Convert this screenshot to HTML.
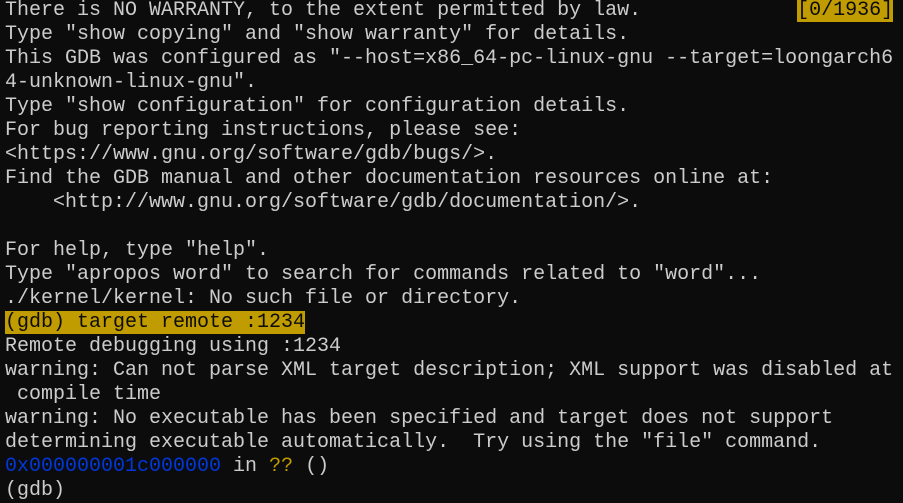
<!DOCTYPE html>
<html><head><meta charset="utf-8"><style>
html,body{margin:0;padding:0;background:#0c0c0c;width:903px;height:498px;overflow:hidden}
pre{margin:0;position:absolute;left:5px;top:-1px;font-family:"Liberation Mono",monospace;font-size:20px;line-height:24px;color:#cccccc;white-space:pre}
.hl{background:#c19c00;color:#0c0c0c}
.b{color:#0037da}.y{color:#c19c00}
</style></head><body>
<pre>There is NO WARRANTY, to the extent permitted by law.             <span class="hl">[0/1936]</span>
Type "show copying" and "show warranty" for details.
This GDB was configured as "--host=x86_64-pc-linux-gnu --target=loongarch6
4-unknown-linux-gnu".
Type "show configuration" for configuration details.
For bug reporting instructions, please see:
&lt;https://www.gnu.org/software/gdb/bugs/&gt;.
Find the GDB manual and other documentation resources online at:
    &lt;http://www.gnu.org/software/gdb/documentation/&gt;.

For help, type "help".
Type "apropos word" to search for commands related to "word"...
./kernel/kernel: No such file or directory.
<span class="hl">(gdb) target remote :1234</span>
Remote debugging using :1234
warning: Can not parse XML target description; XML support was disabled at
 compile time
warning: No executable has been specified and target does not support
determining executable automatically.  Try using the "file" command.
<span class="b">0x000000001c000000</span> in <span class="y">??</span> ()
(gdb) </pre>
</body></html>
